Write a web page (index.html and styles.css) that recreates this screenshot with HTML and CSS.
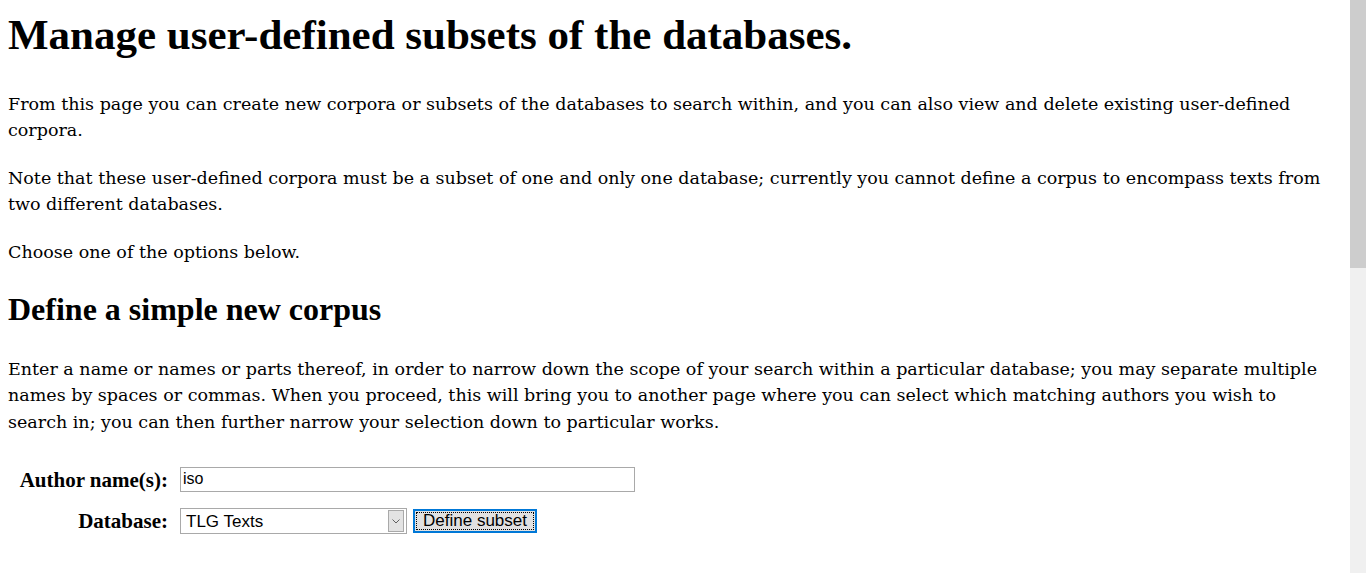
FILE: index.html
```html
<!DOCTYPE html>
<html>
<head>
<meta charset="utf-8">
<title>Manage corpora</title>
<link rel="stylesheet" href="styles.css">
</head>
<body>
<div class="page">
<h1 class="title">Manage user-defined subsets of the databases.</h1>
<p class="para para--first">From this page you can create new corpora or subsets of the databases to search within, and you can also view and delete existing user-defined corpora.</p>
<p class="para">Note that these user-defined corpora must be a subset of one and only one database; currently you cannot define a corpus to encompass texts from two different databases.</p>
<p class="para">Choose one of the options below.</p>
<h2 class="section">Define a simple new corpus</h2>
<p class="para para--intro">Enter a name or names or parts thereof, in order to narrow down the scope of your search within a particular database; you may separate multiple names by spaces or commas. When you proceed, this will bring you to another page where you can select which matching authors you wish to search in; you can then further narrow your selection down to particular works.</p>
<form class="form">
  <div class="row">
    <label class="label label--author" for="author">Author name(s):</label>
    <input class="text-input" id="author" type="text" value="iso">
  </div>
  <div class="row">
    <label class="label" for="db">Database:</label>
    <span class="select-wrap">
      <select class="select" id="db">
        <option>TLG Texts</option>
        <option>PHI Latin Texts</option>
      </select>
    </span>
    <button class="button" type="button">Define subset</button>
  </div>
</form>
</div>
<div class="scrollbar"><div class="thumb"></div></div>
</body>
</html>
```
FILE: styles.css
```css
html, body {
  margin: 0;
  padding: 0;
  background: #ffffff;
  overflow: hidden;
}
body {
  font-family: "DejaVu Serif", serif;
  color: #000;
}
.page {
  width: 1342px;
  padding: 0 8px;
  box-sizing: border-box;
  display: flow-root;
}
.title {
  font-family: "Liberation Serif", serif;
  font-size: 43px;
  font-weight: bold;
  line-height: 46px;
  margin: 11.5px 0 0 0;
}
.para {
  font-size: 17.5px;
  line-height: 26.5px;
  margin: 21px 0 0 0;
}
.para--first { margin-top: 33px; }
.section {
  font-family: "Liberation Serif", serif;
  font-size: 32px;
  font-weight: bold;
  line-height: 36px;
  margin: 26px 0 0 0;
}
.para--intro { margin-top: 28.5px; }
.form {
  margin-top: 30px;
  display: flex;
  flex-direction: column;
  gap: 15px;
}
.row {
  display: flex;
  align-items: center;
  gap: 12px;
}
.label {
  width: 160px;
  flex: none;
  white-space: nowrap;
  text-align: right;
  font-family: "Liberation Serif", serif;
  font-size: 21px;
  font-weight: bold;
}
.label--author {
  padding-top: 3px;
}
.text-input {
  width: 455px;
  height: 25px;
  box-sizing: border-box;
  border: 1px solid #a9a9a9;
  padding: 0 2px;
  font-family: "Liberation Sans", Arial, sans-serif;
  font-size: 16px;
  margin: 0;
  outline: none;
}
.select-wrap {
  position: relative;
  display: inline-block;
  height: 26px;
}
.select {
  appearance: none;
  -webkit-appearance: none;
  width: 227px;
  height: 26px;
  box-sizing: border-box;
  border: 1px solid #a9a9a9;
  background: #fff;
  padding: 0 5px;
  font-family: "Liberation Sans", Arial, sans-serif;
  font-size: 17px;
  color: #000;
  margin: 0;
  border-radius: 0;
  display: block;
}
.select-wrap::after {
  content: "";
  position: absolute;
  right: 3px;
  top: 2px;
  width: 16px;
  height: 22px;
  box-sizing: border-box;
  border: 1px solid #a9a9a9;
  background: #e3e3e3 url("data:image/svg+xml;utf8,<svg xmlns='http://www.w3.org/2000/svg' width='8' height='5'><path d='M0.5 0.5 L4 4 L7.5 0.5' fill='none' stroke='%23606060' stroke-width='1'/></svg>") no-repeat center;
  pointer-events: none;
}
.button {
  margin-left: -6px;
  height: 24px;
  width: 124px;
  box-sizing: border-box;
  border: 2px solid #0078d7;
  border-radius: 0;
  background: #e1e1e1;
  font-family: "Liberation Sans", Arial, sans-serif;
  font-size: 17px;
  line-height: 18px;
  color: #000;
  padding: 0;
  outline: 1px dotted #000;
  outline-offset: -4px;
}
.scrollbar {
  position: fixed;
  top: 0;
  right: 0;
  width: 16px;
  height: 100%;
  background: #f0f0f0;
}
.thumb {
  width: 16px;
  height: 268px;
  background: #cdcdcd;
}
```
